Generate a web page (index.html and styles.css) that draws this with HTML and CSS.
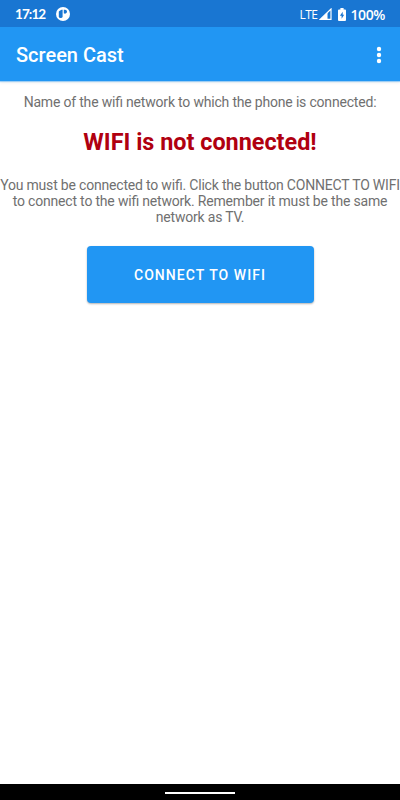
FILE: index.html
```html
<!DOCTYPE html>
<html lang="en">
<head>
  <meta charset="UTF-8" />
  <meta name="viewport" content="width=device-width, initial-scale=1" />
  <title>Screen Cast</title>
  <link rel="stylesheet" href="styles.css">
</head>
<body>
  <div class="status-bar">
    <span class="clock">17:12</span>
    <svg class="app-icon" width="14" height="14" viewBox="0 0 14 14" aria-hidden="true">
      <circle cx="7" cy="7" r="7" fill="#fff" />
      <path d="M2.8 4.5C4 3.200 5.300 2.700 6.600 2.700v6.500a1.900 1.900 0 0 1-3.800 0z" fill="#1976d2" />
      <path d="M7.800 2.700h1.200a2 2 0 1 1-1.200 3.600z" fill="#1976d2" />
    </svg>
    <span class="network">LTE</span>
    <svg class="signal" width="13" height="12" viewBox="0 0 13 12" aria-hidden="true">
      <path d="M1.400 11.300L12 1v10.300z" fill="none" stroke="#fff" stroke-width="1.200" />
      <path d="M1 11.800L8.500 4.500v7.300z" fill="#fff" />
    </svg>
    <svg class="battery" width="8" height="13" viewBox="0 0 8 13" aria-hidden="true">
      <path d="M2.400 0h3.200v1.400H7a1 1 0 0 1 1 1V12a1 1 0 0 1-1 1H1a1 1 0 0 1-1-1V2.400a1 1 0 0 1 1-1h1.400z" fill="#fff" />
      <path d="M4.700 3.800L1.900 7.700h1.700v3L6.200 6.800H4.700z" fill="#1976d2" />
    </svg>
    <span class="percent">100%</span>
  </div>

  <header>
    <h1>Screen Cast</h1>
    <button class="menu" aria-label="More options">
      <svg width="6" height="18" viewBox="0 0 6 18">
        <circle cx="3" cy="3" r="2.200" fill="#fff" />
        <circle cx="3" cy="9" r="2.200" fill="#fff" />
        <circle cx="3" cy="15" r="2.200" fill="#fff" />
      </svg>
    </button>
  </header>

  <main>
    <p class="label">Name of the wifi network to which the phone is connected:</p>
    <h2>WIFI is not connected!</h2>
    <p class="hint">
      You must be connected to wifi. Click the button CONNECT TO WIFI<br>
      to connect to the wifi network. Remember it must be the same<br>
      network as TV.
    </p>
    <button class="connect">CONNECT TO WIFI</button>
  </main>

  <footer>
    <div class="home-handle"></div>
  </footer>
</body>
</html>
```

FILE: styles.css
```css
* {
  box-sizing: border-box;
  margin: 0;
  padding: 0;
}
body {
  font-family: Roboto, sans-serif;
  background: #fff;
  color: #707070;
  height: 100vh;
  display: flex;
  flex-direction: column;
  overflow: hidden;
}

button {
  font-family: inherit;
  border: none;
  color: #fff;
  cursor: pointer;
}

/* Status bar */
.status-bar {
  height: 27px;
  padding: 1px 15px 0 15px;
  display: flex;
  align-items: center;
  background: #1976d2;
  color: #fff;
}
.clock {
  width: 31px;
  font-family: Lato, sans-serif;
  font-size: 13.5px;
  font-weight: 700;
  letter-spacing: -0.9px;
}
.app-icon {
  margin-left: 10px;
}
.network {
  margin-left: auto;
  font-family: "Open Sans", sans-serif;
  font-size: 12px;
  letter-spacing: -0.5px;
}
.signal {
  margin-left: 2px;
}
.battery {
  margin-left: 6px;
}
.percent {
  margin-left: 4px;
  font-family: "Open Sans", sans-serif;
  font-size: 14px;
  font-weight: 600;
  letter-spacing: -0.4px;
}

/* App bar */
header {
  height: 54px;
  padding: 2px 18px 0 16px;
  display: flex;
  align-items: center;
  justify-content: space-between;
  background: #2196f3;
  color: #fff;
  box-shadow: 0 1px 1px rgba(33,150,243,0.4), 0 2px 3px rgba(0,0,0,0.06);
}
h1 {
  font-size: 20px;
  font-weight: 500;
}
.menu {
  display: flex;
  background: none;
}

main {
  flex: 1;
  text-align: center;
  white-space: nowrap;
}
.label,
.hint {
  font-size: 14px;
  line-height: 16px;
  letter-spacing: -0.19px;
  font-feature-settings: "liga" 1;
}
.label {
  margin-top: 13px;
}
h2 {
  margin-top: 18px;
  font-size: 23.4px;
  line-height: 28px;
  font-weight: 700;
  color: #b00010;
}
.hint {
  margin-top: 21px;
}
.connect {
  width: 227px;
  height: 57px;
  margin-top: 21px;
  border-radius: 4px;
  background: #2196f3;
  font-size: 14px;
  font-weight: 500;
  letter-spacing: 1.05px;
  box-shadow: 0 1px 2px rgba(0,0,0,0.3);
}

/* Navigation bar */
footer {
  height: 16px;
  display: flex;
  align-items: center;
  justify-content: center;
  background: #000;
}
.home-handle {
  width: 70px;
  height: 2px;
  margin-top: 2px;
  background: #fff;
}
```
